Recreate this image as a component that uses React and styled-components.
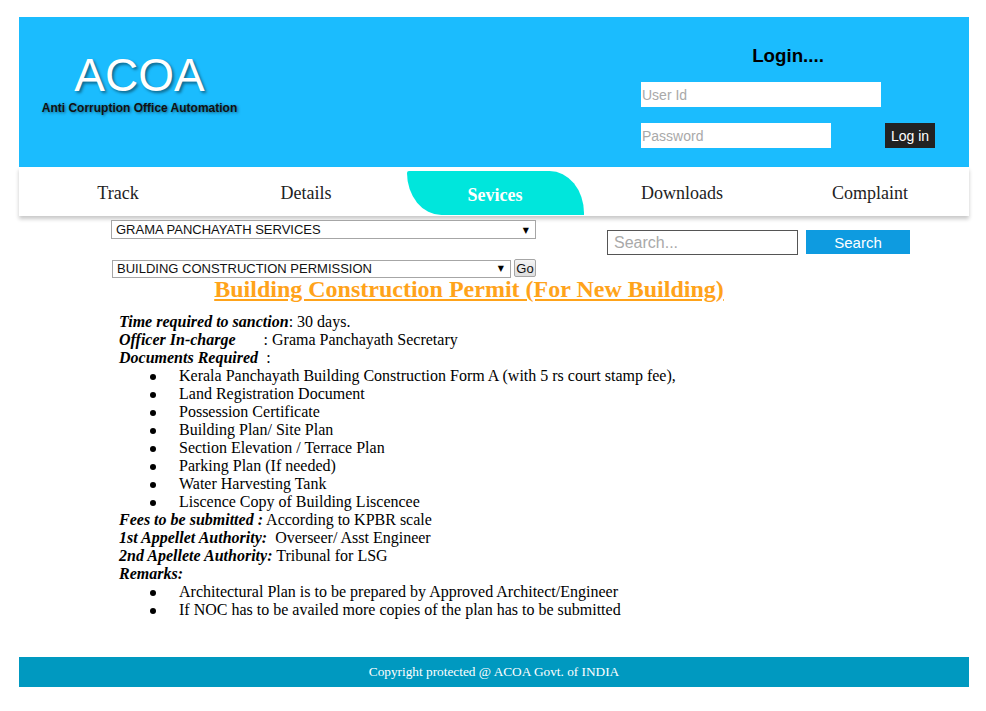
import React from "react";
import styled, { createGlobalStyle } from "styled-components";

const Global = createGlobalStyle`
  html, body { margin: 0; padding: 0; background: #fff; }
  body { font-family: "Liberation Serif", "Times New Roman", serif; }
  * { box-sizing: border-box; }
`;

const Page = styled.div`
  width: 950px;
  margin: 17px 0 24px 19px;
`;

const Header = styled.header`
  height: 150px;
  background: #1bbcfe;
  display: flex;
  justify-content: space-between;
`;

const Brand = styled.div`
  margin-left: 24px;
  width: 193px;
  display: flex;
  flex-direction: column;
  align-items: center;
  font-family: "Liberation Sans", Arial, sans-serif;
`;

const Logo = styled.div`
  margin-top: 35px;
  font-size: 46px;
  line-height: 46px;
  color: #fff;
  text-shadow: 2px 2px 3px rgba(0, 0, 0, 0.45);
`;

const Tagline = styled.div`
  margin-top: 3px;
  font-size: 12px;
  line-height: 14px;
  font-weight: bold;
  color: #111;
  white-space: nowrap;
  text-shadow: 1px 1px 3px rgba(0, 0, 0, 0.5);
`;

const Login = styled.div`
  width: 294px;
  margin-right: 34px;
  padding-top: 28px;
  display: flex;
  flex-direction: column;
  font-family: "Liberation Sans", Arial, sans-serif;
`;

const LoginTitle = styled.h3`
  margin: 0;
  font-size: 18.72px;
  line-height: 22px;
  font-weight: bold;
  text-align: center;
  color: #000;
`;

const Field = styled.input`
  border: none;
  outline: none;
  height: 25px;
  width: ${(p) => p.$w}px;
  padding: 0 1px;
  font-family: "Liberation Sans", Arial, sans-serif;
  font-size: 14px;
  background: #fff;
  &::placeholder { color: #a9a9a9; }
`;

const LoginRow = styled.div`
  display: flex;
  justify-content: space-between;
  margin-top: ${(p) => p.$mt}px;
`;

const DarkButton = styled.button`
  width: 50px;
  height: 25px;
  border: none;
  background: #222;
  color: #fff;
  font-family: "Liberation Sans", Arial, sans-serif;
  font-size: 14px;
  padding: 0;
`;

const Nav = styled.nav`
  height: 49px;
  background: #fff;
  box-shadow: 0 3px 4px rgba(0, 0, 0, 0.22);
  display: flex;
  padding-left: 5px;
  position: relative;
`;

const NavItem = styled.div`
  width: 188px;
  display: flex;
  align-items: center;
  justify-content: center;
  padding-top: 3px;
  font-size: 18px;
  color: #222;
`;

const ActiveTab = styled.div`
  margin: -1px 0 0 2px;
  width: 177px;
  height: 44px;
  background: #00e6dc;
  border-radius: 2px 36px 0 36px / 2px 44px 0 44px;
  display: flex;
  align-items: center;
  justify-content: center;
  padding-top: 5px;
  color: #fff;
  font-weight: bold;
  font-size: 18px;
`;

const Main = styled.main`
  padding-left: 92px;
`;

const TopRow = styled.div`
  display: flex;
  align-items: flex-start;
`;

const SelectCol = styled.div`
  width: 425px;
  padding-top: 4px;
  display: flex;
  flex-direction: column;
  gap: 20px;
`;

const SelectLine = styled.div`
  display: flex;
  gap: 3px;
  margin-left: ${(p) => p.$ml || 0}px;
`;

const SelectWrap = styled.div`
  position: relative;
  width: ${(p) => p.$w}px;
  height: ${(p) => p.$h}px;
`;

const Select = styled.select`
  appearance: none;
  -webkit-appearance: none;
  width: 100%;
  height: 100%;
  border: 1px solid #a6a6a6;
  border-radius: 0;
  background: #fff;
  color: #111;
  padding: 0 0 0 4px;
  font-family: "Liberation Sans", Arial, sans-serif;
  font-size: 13px;
  outline: none;
`;

const Arrow = styled.span`
  position: absolute;
  right: 7px;
  top: 50%;
  transform: translateY(-50%);
  font-size: 8px;
  color: #000;
  pointer-events: none;
  font-family: "DejaVu Sans", sans-serif;
`;

const GoButton = styled.button`
  width: 22px;
  height: 18px;
  padding: 0;
  border: 1px solid #a6a6a6;
  border-radius: 2px;
  background: linear-gradient(#f4f4f4, #dedede);
  font-family: "Liberation Sans", Arial, sans-serif;
  font-size: 13px;
  color: #111;
`;

const SearchBox = styled.div`
  margin: 14px 0 0 71px;
  display: flex;
  gap: 8px;
  align-items: flex-start;
`;

const SearchInput = styled.input`
  width: 191px;
  height: 25px;
  border: 1px solid #555;
  padding: 0 6px;
  font-family: "Liberation Sans", Arial, sans-serif;
  font-size: 16px;
  outline: none;
  &::placeholder { color: #a9a9a9; }
`;

const SearchButton = styled.button`
  width: 104px;
  height: 24px;
  border: none;
  background: #0e9be0;
  color: #fff;
  font-family: "Liberation Sans", Arial, sans-serif;
  font-size: 15px;
  padding: 0;
`;

const Title = styled.h2`
  width: 716px;
  margin: 0;
  text-align: center;
  font-size: 24px;
  line-height: 25px;
  font-weight: bold;
  color: #ffa31a;
  text-decoration: underline;
`;

const Details = styled.div`
  margin: 11px 0 0 8px;
  font-size: 16px;
  line-height: 18px;
  color: #000;
`;

const Line = styled.div``;

const Label = styled.b`
  font-style: italic;
`;

const List = styled.ul`
  margin: 0;
  padding-left: 60px;
  list-style: none;
`;

const Item = styled.li`
  position: relative;
  &::before {
    content: "";
    position: absolute;
    left: -29px;
    top: 7px;
    width: 6px;
    height: 6px;
    border-radius: 50%;
    background: #000;
  }
`;

const Footer = styled.footer`
  margin-top: 38px;
  height: 30px;
  background: #0099c0;
  color: #fff;
  display: flex;
  align-items: center;
  justify-content: center;
  font-size: 13.3px;
`;

const docs = [
  "Kerala Panchayath Building Construction Form A (with 5 rs court stamp fee),",
  "Land Registration Document",
  "Possession Certificate",
  "Building Plan/ Site Plan",
  "Section Elevation / Terrace Plan",
  "Parking Plan (If needed)",
  "Water Harvesting Tank",
  "Liscence Copy of Building Liscencee",
];

const remarks = [
  "Architectural Plan is to be prepared by Approved Architect/Engineer",
  "If NOC has to be availed more copies of the plan has to be submitted",
];

export default function App() {
  return (
    <>
      <Global />
      <Page>
        <Header>
          <Brand>
            <Logo>ACOA</Logo>
            <Tagline>Anti Corruption Office Automation</Tagline>
          </Brand>
          <Login>
            <LoginTitle>Login....</LoginTitle>
            <LoginRow $mt={15}>
              <Field $w={240} placeholder="User Id" />
            </LoginRow>
            <LoginRow $mt={16}>
              <Field $w={190} type="password" placeholder="Password" />
              <DarkButton>Log in</DarkButton>
            </LoginRow>
          </Login>
        </Header>
        <Nav>
          <NavItem>Track</NavItem>
          <NavItem>Details</NavItem>
          <NavItem>
            <ActiveTab>Sevices</ActiveTab>
          </NavItem>
          <NavItem>Downloads</NavItem>
          <NavItem>Complaint</NavItem>
        </Nav>
        <Main>
          <TopRow>
            <SelectCol>
              <SelectWrap $w={425} $h={19}>
                <Select defaultValue="gp">
                  <option value="gp">GRAMA PANCHAYATH SERVICES</option>
                </Select>
                <Arrow>▼</Arrow>
              </SelectWrap>
              <SelectLine $ml={1}>
                <SelectWrap $w={399} $h={18}>
                  <Select defaultValue="bcp">
                    <option value="bcp">BUILDING CONSTRUCTION PERMISSION</option>
                  </Select>
                  <Arrow>▼</Arrow>
                </SelectWrap>
                <GoButton>Go</GoButton>
              </SelectLine>
            </SelectCol>
            <SearchBox>
              <SearchInput placeholder="Search..." />
              <SearchButton>Search</SearchButton>
            </SearchBox>
          </TopRow>
          <Title>Building Construction Permit (For New Building)</Title>
          <Details>
            <Line>
              <Label>Time required to sanction</Label>: 30 days.
            </Line>
            <Line>
              <Label>Officer In-charge</Label>
              {"\u00a0\u00a0\u00a0\u00a0\u00a0\u00a0\u00a0"}: Grama Panchayath Secretary
            </Line>
            <Line>
              <Label>Documents Required</Label>
              {"\u00a0\u00a0"}:
            </Line>
            <List>
              {docs.map((d) => (
                <Item key={d}>{d}</Item>
              ))}
            </List>
            <Line>
              <Label>Fees to be submitted :</Label> According to KPBR scale
            </Line>
            <Line>
              <Label>1st Appellet Authority:</Label>
              {"\u00a0\u00a0"}Overseer/ Asst Engineer
            </Line>
            <Line>
              <Label>2nd Apellete Authority:</Label> Tribunal for LSG
            </Line>
            <Line>
              <Label>Remarks:</Label>
            </Line>
            <List>
              {remarks.map((d) => (
                <Item key={d}>{d}</Item>
              ))}
            </List>
          </Details>
        </Main>
        <Footer>Copyright protected @ ACOA Govt. of INDIA</Footer>
      </Page>
    </>
  );
}
